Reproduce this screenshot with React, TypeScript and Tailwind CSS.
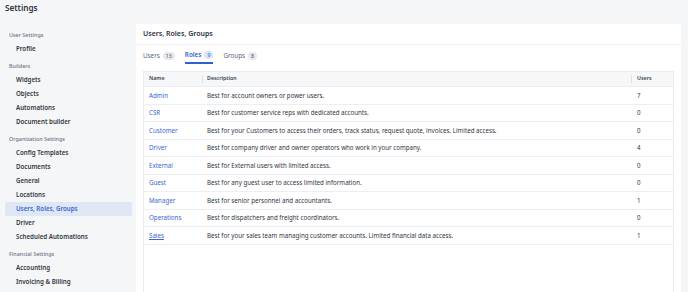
import React from "react";

const sections = [
  { label: "User Settings", items: ["Profile"] },
  { label: "Builders", items: ["Widgets", "Objects", "Automations", "Document builder"] },
  {
    label: "Organization Settings",
    items: ["Config Templates", "Documents", "General", "Locations", "Users, Roles, Groups", "Driver", "Scheduled Automations"],
  },
  { label: "Financial Settings", items: ["Accounting", "Invoicing & Billing"] },
];

const roles = [
  { name: "Admin", desc: "Best for account owners or power users.", users: 7 },
  { name: "CSR", desc: "Best for customer service reps with dedicated accounts.", users: 0 },
  { name: "Customer", desc: "Best for your Customers to access their orders, track status, request quote, invoices. Limited access.", users: 0 },
  { name: "Driver", desc: "Best for company driver and owner operators who work in your company.", users: 4 },
  { name: "External", desc: "Best for External users with limited access.", users: 0 },
  { name: "Guest", desc: "Best for any guest user to access limited information.", users: 0 },
  { name: "Manager", desc: "Best for senior personnel and accountants.", users: 1 },
  { name: "Operations", desc: "Best for dispatchers and freight coordinators.", users: 0 },
  { name: "Sales", desc: "Best for your sales team managing customer accounts. Limited financial data access.", users: 1 },
];

export default function App() {
  return (
    <div
      className="h-[292px] w-[688px] overflow-hidden bg-[#f5f6f8] text-[#2b3340]"
      style={{ fontFamily: '"Noto Sans", "Open Sans", sans-serif' }}
    >
      <div className="h-[24px] pl-[5px] pt-[1px] text-[8.2px] font-semibold leading-[14px]">Settings</div>

      <div className="flex">
        <nav className="w-[132px] shrink-0 pl-[5px] pt-[4px]">
          {sections.map((s, i) => (
            <div key={s.label} className={i === 0 ? "" : "mt-[3px]"}>
              <div className="flex h-[14px] items-center pl-[4px] text-[5.4px] font-medium text-[#6b7385]">{s.label}</div>
              {s.items.map((item) => {
                const active = item === "Users, Roles, Groups";
                return (
                  <div
                    key={item}
                    className={
                      "flex h-[14px] items-center rounded-[2px] pl-[11px] text-[6.2px] font-semibold " +
                      (active ? "bg-[#dfe6f4] text-[#3a66d1]" : "text-[#2f3744]")
                    }
                  >
                    {item}
                  </div>
                );
              })}
            </div>
          ))}
        </nav>

        <main className="ml-[4px] mr-[7px] flex h-[268px] flex-1 flex-col bg-white">
          <div className="flex h-[21px] items-center border-b border-[#eef0f3] px-[7px] text-[7px] font-semibold">
            Users, Roles, Groups
          </div>

          <div className="mt-[2px] flex gap-[10px] px-[7px]">
            <div className="flex h-[17px] items-center gap-[3px] text-[6.3px] text-[#5d6573]">
              Users
              <span className="rounded-full bg-[#e6e8ec] px-[3px] text-[5.3px] leading-[8px] text-[#4b5563]">13</span>
            </div>
            <div className="flex h-[17px] items-center gap-[3px] border-b-2 border-[#2f5fd0] text-[6.3px] font-semibold text-[#2f5fd0]">
              Roles
              <span className="rounded-full bg-[#dbe5f8] px-[3px] text-[5.3px] font-normal leading-[8px] text-[#2f5fd0]">9</span>
            </div>
            <div className="flex h-[17px] items-center gap-[3px] text-[6.3px] text-[#5d6573]">
              Groups
              <span className="rounded-full bg-[#e6e8ec] px-[3px] text-[5.3px] leading-[8px] text-[#4b5563]">8</span>
            </div>
          </div>

          <div className="mx-[7px] mt-[7px] flex-1 border border-b-0 border-[#e8eaee]">
            <div className="flex h-[14px] items-center bg-[#f6f7f9] text-[5.3px] font-semibold text-[#3a4250]">
              <div className="w-[58px] pl-[5px]">Name</div>
              <div className="flex-1 border-l border-[#dfe2e7] pl-[4px]">Description</div>
              <div className="w-[42px] border-l border-[#dfe2e7] pl-[5px]">Users</div>
            </div>
            {roles.map((r) => (
              <div key={r.name} className="flex h-[17.5px] items-center border-t border-[#eceef1] text-[6.2px]">
                <div className={"w-[58px] pl-[5px] text-[#3a66d1] " + (r.name === "Sales" ? "underline" : "")}>{r.name}</div>
                <div className="flex-1 pl-[5px] text-[#2f3642]">{r.desc}</div>
                <div className="w-[42px] pl-[6px] text-[#2f3642]">{r.users}</div>
              </div>
            ))}
            <div className="border-t border-[#eceef1]" />
          </div>
        </main>
      </div>
    </div>
  );
}
